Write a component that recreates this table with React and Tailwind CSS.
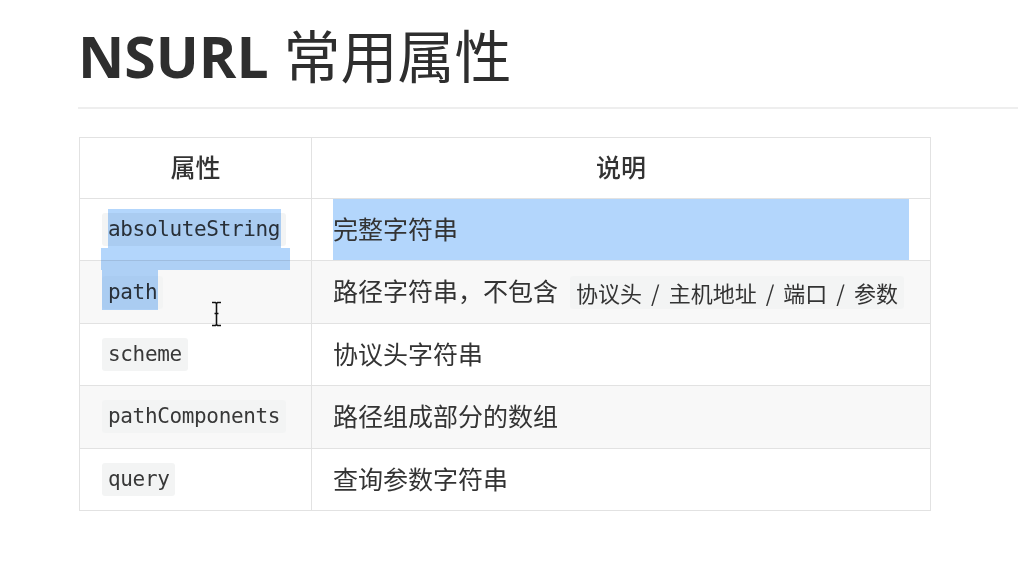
import React from "react";

const rows = [
  { key: "absoluteString", desc: "完整字符串", selected: true },
  { key: "path", desc: "路径字符串，不包含", extra: ["协议头", "主机地址", "端口", "参数"] },
  { key: "scheme", desc: "协议头字符串" },
  { key: "pathComponents", desc: "路径组成部分的数组" },
  { key: "query", desc: "查询参数字符串" },
];

const Code = ({ children }) => (
  <code className="inline-block rounded-[3px] bg-[#f3f4f4] px-[6px] font-['DejaVu_Sans_Mono','Noto_Sans_CJK_SC',monospace] text-[21px] leading-[33px] tracking-[-0.35px] text-[#383838]">
    {children}
  </code>
);

const App = () => {
  return (
    <div className="relative h-[586px] w-[1018px] overflow-hidden bg-white font-['Open_Sans','Noto_Sans_CJK_SC',sans-serif] text-[#333]">
      {/* Heading */}
      <div className="ml-[78px] pt-[23px]">
        <h1 className="whitespace-nowrap border-b-2 border-[#eeeeee] pb-[17px] text-[57px] leading-[67px] text-[#2e2e2e]">
          <span className="font-bold">NSURL</span>{" "}
          <span className="font-normal">常用属性</span>
        </h1>
      </div>

      {/* Table */}
      <div className="relative ml-[79px] mt-[28px] w-[852px] border border-[#e2e2e2] text-[25px]">
        <div className="flex h-[60px] font-medium">
          <div className="flex w-[232px] items-center justify-center border-r border-[#e2e2e2]">属性</div>
          <div className="flex flex-1 items-center justify-center">说明</div>
        </div>

        {rows.map((row, i) => (
          <div
            key={row.key}
            className={`flex h-[62.4px] border-t border-[#e2e2e2] ${i % 2 === 1 ? "bg-[#f8f8f8]" : "bg-white"}`}
          >
            <div className="flex w-[232px] shrink-0 items-center border-r border-[#e2e2e2] px-[22px]">
              <Code>{row.key}</Code>
            </div>
            <div className="flex min-w-0 flex-1 px-[21px]">
              <div
                className={`flex h-full flex-1 items-center whitespace-nowrap ${row.selected ? "bg-[#b3d6fc]" : ""}`}
              >
                <span>{row.desc}</span>
                {row.extra && (
                  <code className="ml-[12px] inline-block rounded-[3px] bg-[#f3f4f4] px-[6px] font-['Noto_Sans_CJK_SC',sans-serif] text-[22px] leading-[33px] text-[#333]">
                    {row.extra.map((part, j) => (
                      <React.Fragment key={part}>
                        {j > 0 && <span className="px-[9px]">/</span>}
                        {part}
                      </React.Fragment>
                    ))}
                  </code>
                )}
              </div>
            </div>
          </div>
        ))}

        {/* text selection painted over the first column */}
        <div className="pointer-events-none absolute left-[28px] top-[71px] h-[39px] w-[173px] bg-[#b3d6fc] mix-blend-multiply" />
        <div className="pointer-events-none absolute left-[21px] top-[110px] h-[22px] w-[189px] bg-[#b3d6fc] mix-blend-multiply" />
        <div className="pointer-events-none absolute left-[22px] top-[132px] h-[40px] w-[56px] bg-[#b3d6fc] mix-blend-multiply" />
      </div>

      {/* mouse I-beam cursor */}
      <svg className="absolute left-[210px] top-[301px]" width="13" height="26" viewBox="0 0 13 26">
        <path
          d="M2 1.5h3.5l1 1 1-1H11M6.5 2.5v21M2 24.5h3.5l1-1 1 1H11M4.5 12.5h4"
          fill="none"
          stroke="#fff"
          strokeWidth="3"
        />
        <path
          d="M2 1.5h3.5l1 1 1-1H11M6.5 2.5v21M2 24.5h3.5l1-1 1 1H11M4.5 12.5h4"
          fill="none"
          stroke="#111"
          strokeWidth="1.6"
        />
      </svg>
    </div>
  );
};

export default App;
